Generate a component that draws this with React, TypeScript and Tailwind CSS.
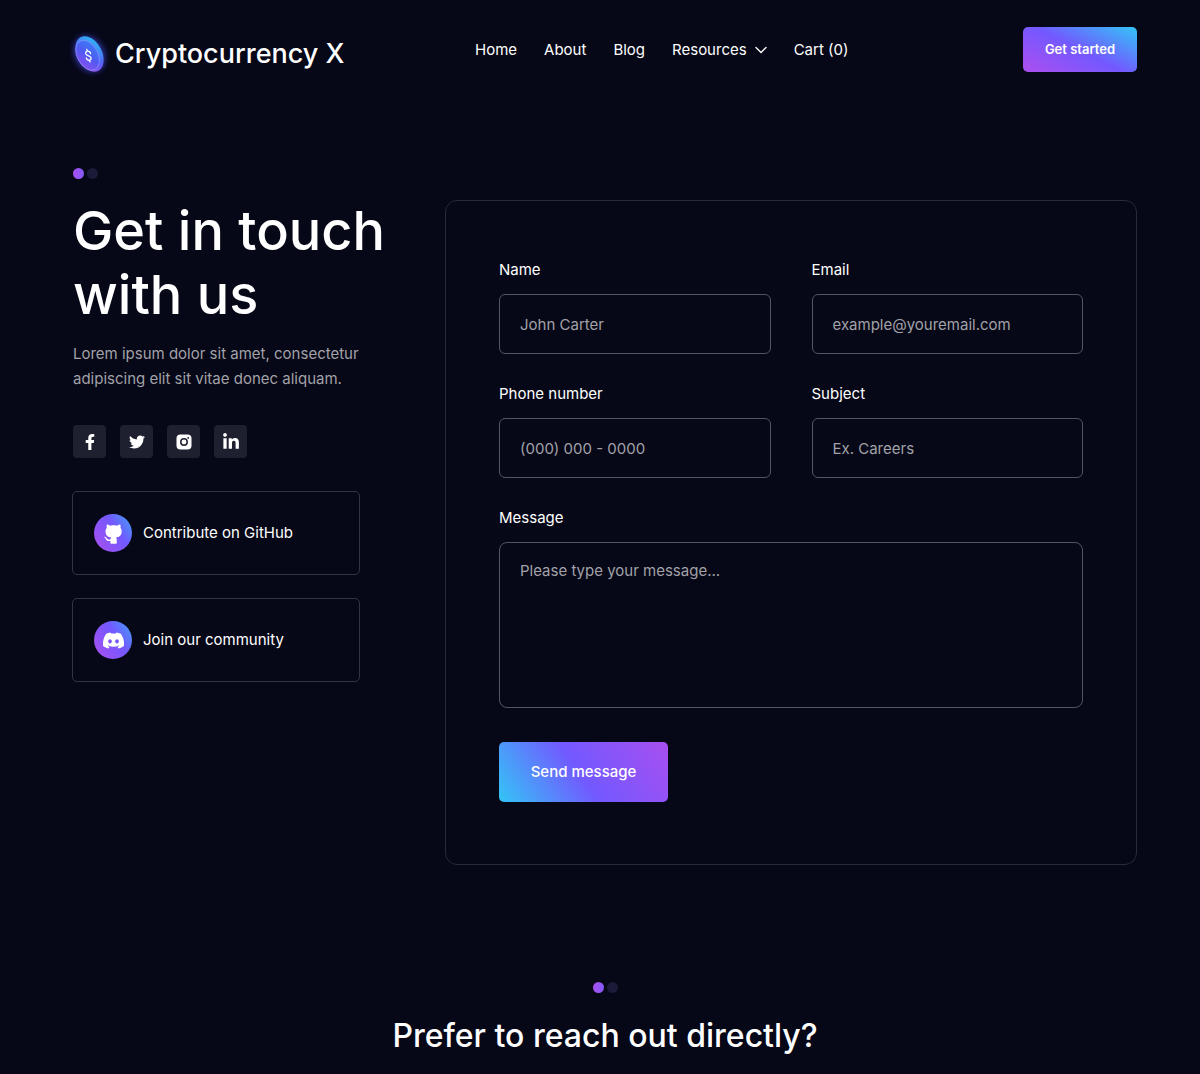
import type { InputHTMLAttributes, ReactNode } from 'react';
import { FaDiscord, FaFacebookF, FaLinkedinIn, FaTwitter } from 'react-icons/fa';

function CoinLogo() {
  return (
    <svg viewBox="0 0 46 52" className="h-[52px] w-[46px] shrink-0 overflow-visible" aria-hidden="true">
      <defs>
        <linearGradient id="coinRim" x1="0.1" y1="0.9" x2="0.9" y2="0.2">
          <stop offset="0" stopColor="#a455f0" />
          <stop offset="0.45" stopColor="#5b5cf6" />
          <stop offset="1" stopColor="#2fb2f5" />
        </linearGradient>
        <linearGradient id="coinFace" x1="0.1" y1="0.8" x2="0.9" y2="0.2">
          <stop offset="0" stopColor="#8350ee" />
          <stop offset="0.5" stopColor="#4f5bf3" />
          <stop offset="1" stopColor="#3d78f5" />
        </linearGradient>
        <filter id="coinGlow" x="-50%" y="-50%" width="200%" height="200%">
          <feGaussianBlur stdDeviation="3" />
        </filter>
      </defs>
      <ellipse cx="23.5" cy="26" rx="14" ry="18.5" transform="rotate(-28 23.5 26)" fill="#4a4ff0" opacity="0.75" filter="url(#coinGlow)" />
      <ellipse cx="23.5" cy="26" rx="12.4" ry="19" transform="rotate(-28 23.5 26)" fill="url(#coinRim)" />
      <ellipse cx="21.6" cy="27.2" rx="10.4" ry="16" transform="rotate(-28 21.6 27.2)" fill="url(#coinFace)" stroke="#8f9cff" strokeWidth="0.6" />
      <path
        d="M24.6 25.6C24.3 23.9 22.8 22.9 21.3 23.2C19.7 23.5 19.2 25.1 20.1 26.3C21 27.5 23.6 27.7 24.7 29.2C25.6 30.5 25 32 23.5 32.2C21.9 32.4 20.6 31.3 20.3 29.8M21.4 23.2L20.7 21.3M23.4 32.2L24.1 34"
        fill="none"
        stroke="#fff"
        strokeWidth="1.3"
        strokeLinecap="round"
      />
    </svg>
  );
}

function InstagramIcon() {
  return (
    <svg viewBox="0 0 16 16" className="size-4" aria-hidden="true">
      <rect x="0.5" y="0.5" width="15" height="15" rx="4" fill="#fff" />
      <circle cx="8" cy="8" r="3.2" fill="none" stroke="#1f202f" strokeWidth="1.5" />
      <circle cx="12.2" cy="3.9" r="0.9" fill="#1f202f" />
    </svg>
  );
}

function GitHubCat() {
  return (
    <svg viewBox="2 2.5 12 13" className="h-[21px] w-[19px]" fill="currentColor" aria-hidden="true">
      <path d="M6.02 15c.03-.4-.01-.71-.01-1.28-2.01.37-2.53-.49-2.69-.94-.09-.23-.48-.94-.82-1.13-.28-.15-.68-.52-.01-.53.63-.01 1.08.58 1.28.82.72 1.21 1.87.87 2.33.66.07-.52.28-.87.51-1.07-1.78-.2-3.64-.89-3.64-3.95 0-.87.31-1.59.82-2.15-.08-.2-.36-1.02.08-2.12 0 0 .67-.21 2.2.82.64-.18 1.32-.27 2-.27s1.36.09 2 .27c1.53-1.04 2.2-.82 2.2-.82.44 1.1.16 1.92.08 2.12.51.56.82 1.27.82 2.15 0 3.07-1.87 3.75-3.65 3.95.29.25.54.73.54 1.48V15c0 .3-.2.4-.5.4H6.5c-.3 0-.48-.1-.48-.4Z" />
    </svg>
  );
}

function Dots() {
  return (
    <div className="flex gap-[3px]">
      <span className="size-[11px] rounded-full bg-linear-to-r from-[#a84ff0] to-[#8459fb]" />
      <span className="size-[11px] rounded-full bg-[#1b1a38]" />
    </div>
  );
}

function SocialLink({ label, children }: { label: string; children: ReactNode }) {
  return (
    <a href="#" aria-label={label} className="flex size-[33px] items-center justify-center rounded bg-[#1f202f]">
      {children}
    </a>
  );
}

function CommunityCard({ text, children }: { text: string; children: ReactNode }) {
  return (
    <a href="#" className="flex h-[84px] items-center gap-[11px] rounded-[5px] border border-[#343441] px-[21px]">
      <span className="flex size-[38px] items-center justify-center rounded-full bg-[linear-gradient(56deg,#a84ff0_5%,#7259ff_60%,#3fa4f8_100%)]">
        {children}
      </span>
      {text}
    </a>
  );
}

function Field({ id, label, ...props }: { id: string; label: string } & InputHTMLAttributes<HTMLInputElement>) {
  return (
    <div className="flex min-w-0 flex-col gap-3">
      <label htmlFor={id} className="leading-6">
        {label}
      </label>
      <input
        id={id}
        {...props}
        className="h-[60px] w-full rounded-md border border-[#555562] bg-transparent px-5 outline-none placeholder:text-[#a2a2a8]"
      />
    </div>
  );
}

export default function App() {
  return (
    <div className="min-h-screen bg-[#060717] pr-[63px] pl-[73px] pb-4 font-['Inter',sans-serif] text-[15px] text-white">
      <header className="flex items-start justify-between pt-[27px]">
        <a href="#" className="-ml-[7px] flex items-center gap-[3px] text-[27px] leading-[54px] font-medium whitespace-nowrap">
          <CoinLogo />
          Cryptocurrency X
        </a>
        <nav className="mr-11 flex h-[46px] items-center gap-[27px] whitespace-nowrap">
          <a href="#">Home</a>
          <a href="#">About</a>
          <a href="#">Blog</a>
          <button type="button" className="flex items-center gap-2">
            Resources
            <svg viewBox="0 0 12 8" className="h-2 w-3" fill="none" stroke="currentColor" strokeWidth="1.3" strokeLinecap="round" aria-hidden="true">
              <path d="M1 1.5 6 6.5l5-5" />
            </svg>
          </button>
          <a href="#">Cart (0)</a>
        </nav>
        <button
          type="button"
          className="h-[45px] w-[114px] rounded-[5px] bg-[linear-gradient(27deg,#a84ff0_5%,#7259ff_50%,#33c5f6_100%)] text-[13px] font-semibold"
        >
          Get started
        </button>
      </header>

      <main>
        <section className="flex items-start gap-[60px] pt-[87px]">
          <div className="w-[312px] shrink-0">
            <Dots />
            <h1 className="mt-5 text-[54px] leading-[64px] font-medium whitespace-nowrap">
              Get in touch
              <br />
              with us
            </h1>
            <p className="mt-[14px] leading-[25px] whitespace-nowrap text-[#a2a2a8]">
              Lorem ipsum dolor sit amet, consectetur
              <br />
              adipiscing elit sit vitae donec aliquam.
            </p>
            <div className="mt-[34px] flex gap-[14px]">
              <SocialLink label="Facebook">
                <FaFacebookF className="size-4" />
              </SocialLink>
              <SocialLink label="Twitter">
                <FaTwitter className="size-4" />
              </SocialLink>
              <SocialLink label="Instagram">
                <InstagramIcon />
              </SocialLink>
              <SocialLink label="LinkedIn">
                <FaLinkedinIn className="size-[18px]" />
              </SocialLink>
            </div>
            <div className="mt-[33px] -ml-px flex w-[288px] flex-col gap-[23px]">
              <CommunityCard text="Contribute on GitHub">
                <GitHubCat />
              </CommunityCard>
              <CommunityCard text="Join our community">
                <FaDiscord className="size-[23px]" />
              </CommunityCard>
            </div>
          </div>

          <form className="mt-8 min-w-0 flex-1 rounded-xl border border-[#292a38] px-[53px] pt-[57px] pb-[62px]">
            <div className="grid grid-cols-2 gap-x-[41px] gap-y-7">
              <Field id="name" label="Name" type="text" placeholder="John Carter" />
              <Field id="email" label="Email" type="email" placeholder="example@youremail.com" />
              <Field id="phone" label="Phone number" type="tel" placeholder="(000) 000 - 0000" />
              <Field id="subject" label="Subject" type="text" placeholder="Ex. Careers" />
              <div className="col-span-2 flex flex-col gap-3">
                <label htmlFor="message" className="leading-6">
                  Message
                </label>
                <textarea
                  id="message"
                  placeholder="Please type your message..."
                  className="h-[166px] w-full resize-none rounded-lg border border-[#555562] bg-transparent px-5 py-4 leading-6 outline-none placeholder:text-[#a2a2a8]"
                />
              </div>
            </div>
            <button
              type="submit"
              className="mt-[34px] h-[60px] w-[169px] rounded-[5px] bg-[linear-gradient(56deg,#33c5f6_0%,#7259ff_48%,#a84ff0_100%)] font-medium"
            >
              Send message
            </button>
          </form>
        </section>

        <section className="flex flex-col items-center pt-[117px]">
          <Dots />
          <h2 className="mt-[23px] text-[32px] leading-10 font-medium">Prefer to reach out directly?</h2>
        </section>
      </main>
    </div>
  );
}
